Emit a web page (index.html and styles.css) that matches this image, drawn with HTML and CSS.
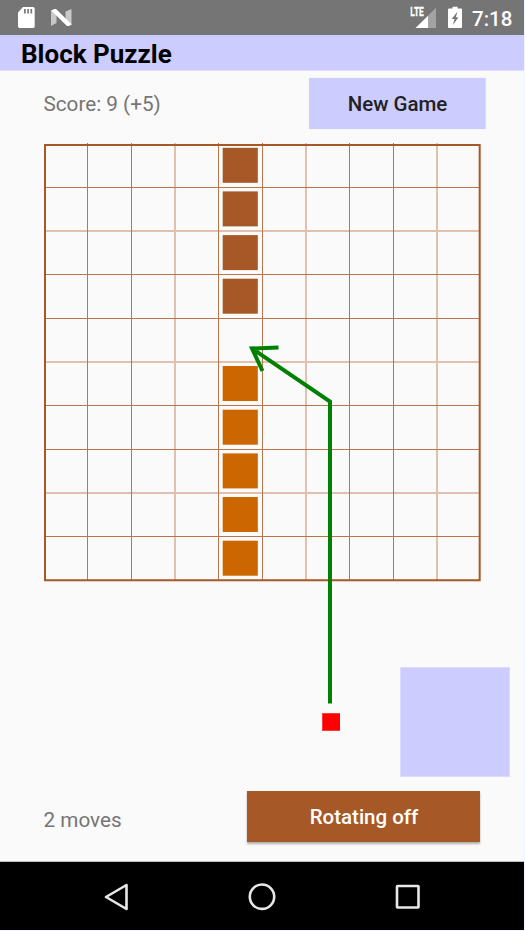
FILE: index.html
```
<!DOCTYPE html>
<html lang="en">
<head>
<meta charset="utf-8">
<title>Block Puzzle</title>
<link rel="stylesheet" href="styles.css">
</head>
<body>
<main class="phone">
  <header class="status">
    <svg class="notifications" width="80" height="35" viewBox="0 0 80 35">
      <path fill="#fff" d="M23 7h10q1.700 0 1.700 1.700v17.600q0 1.700-1.700 1.700H19.700Q18 28 18 26.300V12.500z"/>
      <path stroke="#757575" stroke-width="1.700" d="M24.900 9v4.500M28.100 9v4.500M31.300 9v4.500"/>
      <path fill="#c8c8c8" d="M51 10l5.500 4v9L51 26zM71.500 9v16l-6-4v-9.500z"/>
      <path fill="#fff" d="M51.200 10.500Q53.500 8.500 56 9L71.600 24.300Q70 26.500 66.700 25.700z"/>
    </svg>
    <div class="system">
      <svg width="58" height="35" viewBox="0 0 58 35">
        <path fill="#a3a3a3" d="M18 15.700L26 7.500V28h-8z"/>
        <path fill="#fff" d="M5.500 28L18 15.700V28z"/>
        <text class="lte" x="0.300" y="16.300" textLength="13.500" lengthAdjust="spacingAndGlyphs">LTE</text>
        <path fill="#fff" d="M42.500 6.700h5V8.500h3.500q1 0 1 1V27q0 1-1 1H39q-1 0-1-1V9.500q0-1 1-1h3.500z"/>
        <path fill="#757575" d="M47.500 11.500L41.700 19h2.800l-1.700 6.200 5.600-8h-2.600z"/>
      </svg>
      <span class="clock">7:18</span>
    </div>
  </header>
  <h1 class="title">Block Puzzle</h1>
  <section class="toolbar">
    <span class="label">Score: 9 (+5)</span>
    <button class="button new-game">New Game</button>
  </section>
  <section class="play">
    <svg class="board" width="438" height="439" viewBox="43 143 438 439">
      <g class="grid">
        <path class="soft" d="M175 143V580M306 143V580M437 143V580M45 231H480M45 362H480M45 493H480"/>
        <path d="M87.500 143V580M131.500 143V580M218.500 143V580M262.500 143V580M349.500 143V580M393.500 143V580"/>
        <path d="M45 187.500H480M45 274.500H480M45 318.500H480M45 405.500H480M45 449.500H480M45 536.500H480"/>
      </g>
      <path class="frame" d="M45 144V581M44 145H480M479.700 144V581M44 580.200H480.500"/>
      <g class="brown">
        <rect x="222.700" y="147.800" width="35.100" height="35"/>
        <rect x="222.700" y="191.400" width="35.100" height="35"/>
        <rect x="222.700" y="235.100" width="35.100" height="35"/>
        <rect x="222.700" y="278.700" width="35.100" height="35"/>
      </g>
      <g class="orange">
        <rect x="222.700" y="366" width="35.100" height="35"/>
        <rect x="222.700" y="409.700" width="35.100" height="35"/>
        <rect x="222.700" y="453.400" width="35.100" height="35"/>
        <rect x="222.700" y="497" width="35.100" height="35"/>
        <rect x="222.700" y="540.700" width="35.100" height="35"/>
      </g>
    </svg>
    <div class="tray">
      <div class="piece"></div>
      <div class="slot"></div>
    </div>
    <svg class="arrow" width="100" height="370" viewBox="240 340 100 370">
      <path d="M330 703.500V401.500L252 348.500M278.500 347.500L252 348.500L262.500 371"/>
    </svg>
  </section>
  <section class="footer">
    <span class="label">2 moves</span>
    <button class="button rotate">Rotating off</button>
  </section>
  <nav class="nav">
    <svg width="524" height="68" viewBox="0 862 524 68">
      <path d="M126.500 885L106 897l20.500 12z"/>
      <circle cx="262" cy="896.700" r="12.200"/>
      <rect x="397" y="886" width="21.500" height="21.500" rx="0.500"/>
    </svg>
  </nav>
</main>
</body>
</html>
```

FILE: styles.css
```
* { box-sizing: border-box; }
body {
  margin: 0;
  background: #f0f4ff;
  font-family: Roboto, "Liberation Sans", sans-serif;
}
.phone {
  display: flex;
  flex-direction: column;
  width: 524px;
  height: 930px;
  background: #fafafa;
  overflow: hidden;
}
.status {
  display: flex;
  flex: none;
  justify-content: space-between;
  height: 35px;
  background: #757575;
  color: #fff;
}
.system { display: flex; width: 114px; }
.lte {
  font: 700 12.500px Roboto, sans-serif;
  fill: #fff;
  stroke: #fff;
  stroke-width: 0.300px;
}
.clock {
  margin-left: 4px;
  font-size: 20.500px;
  line-height: 38px;
  font-weight: 500;
}
.title {
  flex: none;
  height: 36px;
  margin: 0;
  padding-left: 21px;
  background: #ccccff;
  border-bottom: 1px solid #dedeff;
  color: #000;
  font-size: 26px;
  line-height: 39px;
  font-weight: 700;
}
.toolbar {
  display: flex;
  flex: none;
  justify-content: space-between;
  height: 72px;
  padding: 7px 39px 0 43.500px;
}
.label {
  color: #757575;
  font-size: 20.700px;
  line-height: 53px;
}
.button {
  height: 51px;
  padding: 0 0 0 1px;
  border: 0;
  font: 500 20.500px/53px Roboto, sans-serif;
}
.new-game {
  width: 176px;
  background: #ccccff;
  color: #212121;
  box-shadow: 1px 0 1px #e0e0e8;
}
.play {
  position: relative;
  flex: none;
  height: 648px;
}
.board {
  display: block;
  margin-left: 43px;
}
.grid { fill: none; stroke: #b9764d; stroke-width: 1; }
.soft { stroke: #dfc1ae; stroke-width: 2; }
.frame { fill: none; stroke: #a65827; stroke-width: 2; }
.brown { fill: #a65827; }
.orange { fill: #cc6600; }
.tray {
  display: flex;
  justify-content: space-between;
  align-items: center;
  width: 188px;
  height: 110px;
  margin: 85px 0 0 322px;
}
.piece {
  width: 18px;
  height: 18px;
  background: #f00;
  border: 1px solid #ff3c3c;
  border-width: 1px 0 1px 1px;
}
.slot {
  width: 110px;
  height: 110px;
  background: #ccccff;
  border: 1px solid #dadaff;
}
.arrow {
  position: absolute;
  left: 240px;
  top: 197px;
}
.arrow path { fill: none; stroke: #008000; stroke-width: 4; }
.footer {
  display: flex;
  flex: none;
  justify-content: space-between;
  height: 70px;
  padding: 0 44px 0 43.500px;
}
.footer .label { line-height: 59px; }
.rotate {
  width: 233px;
  background: #a65827;
  color: #fff;
  box-shadow: 0 2px 2px rgba(0, 0, 0, 0.300);
}
.nav {
  flex: none;
  height: 69px;
  background: #000;
  border-top: 1px solid #bdbdbd;
}
.nav svg { display: block; fill: none; stroke: #e8e8e8; stroke-width: 2.600; stroke-linejoin: round; }
```
